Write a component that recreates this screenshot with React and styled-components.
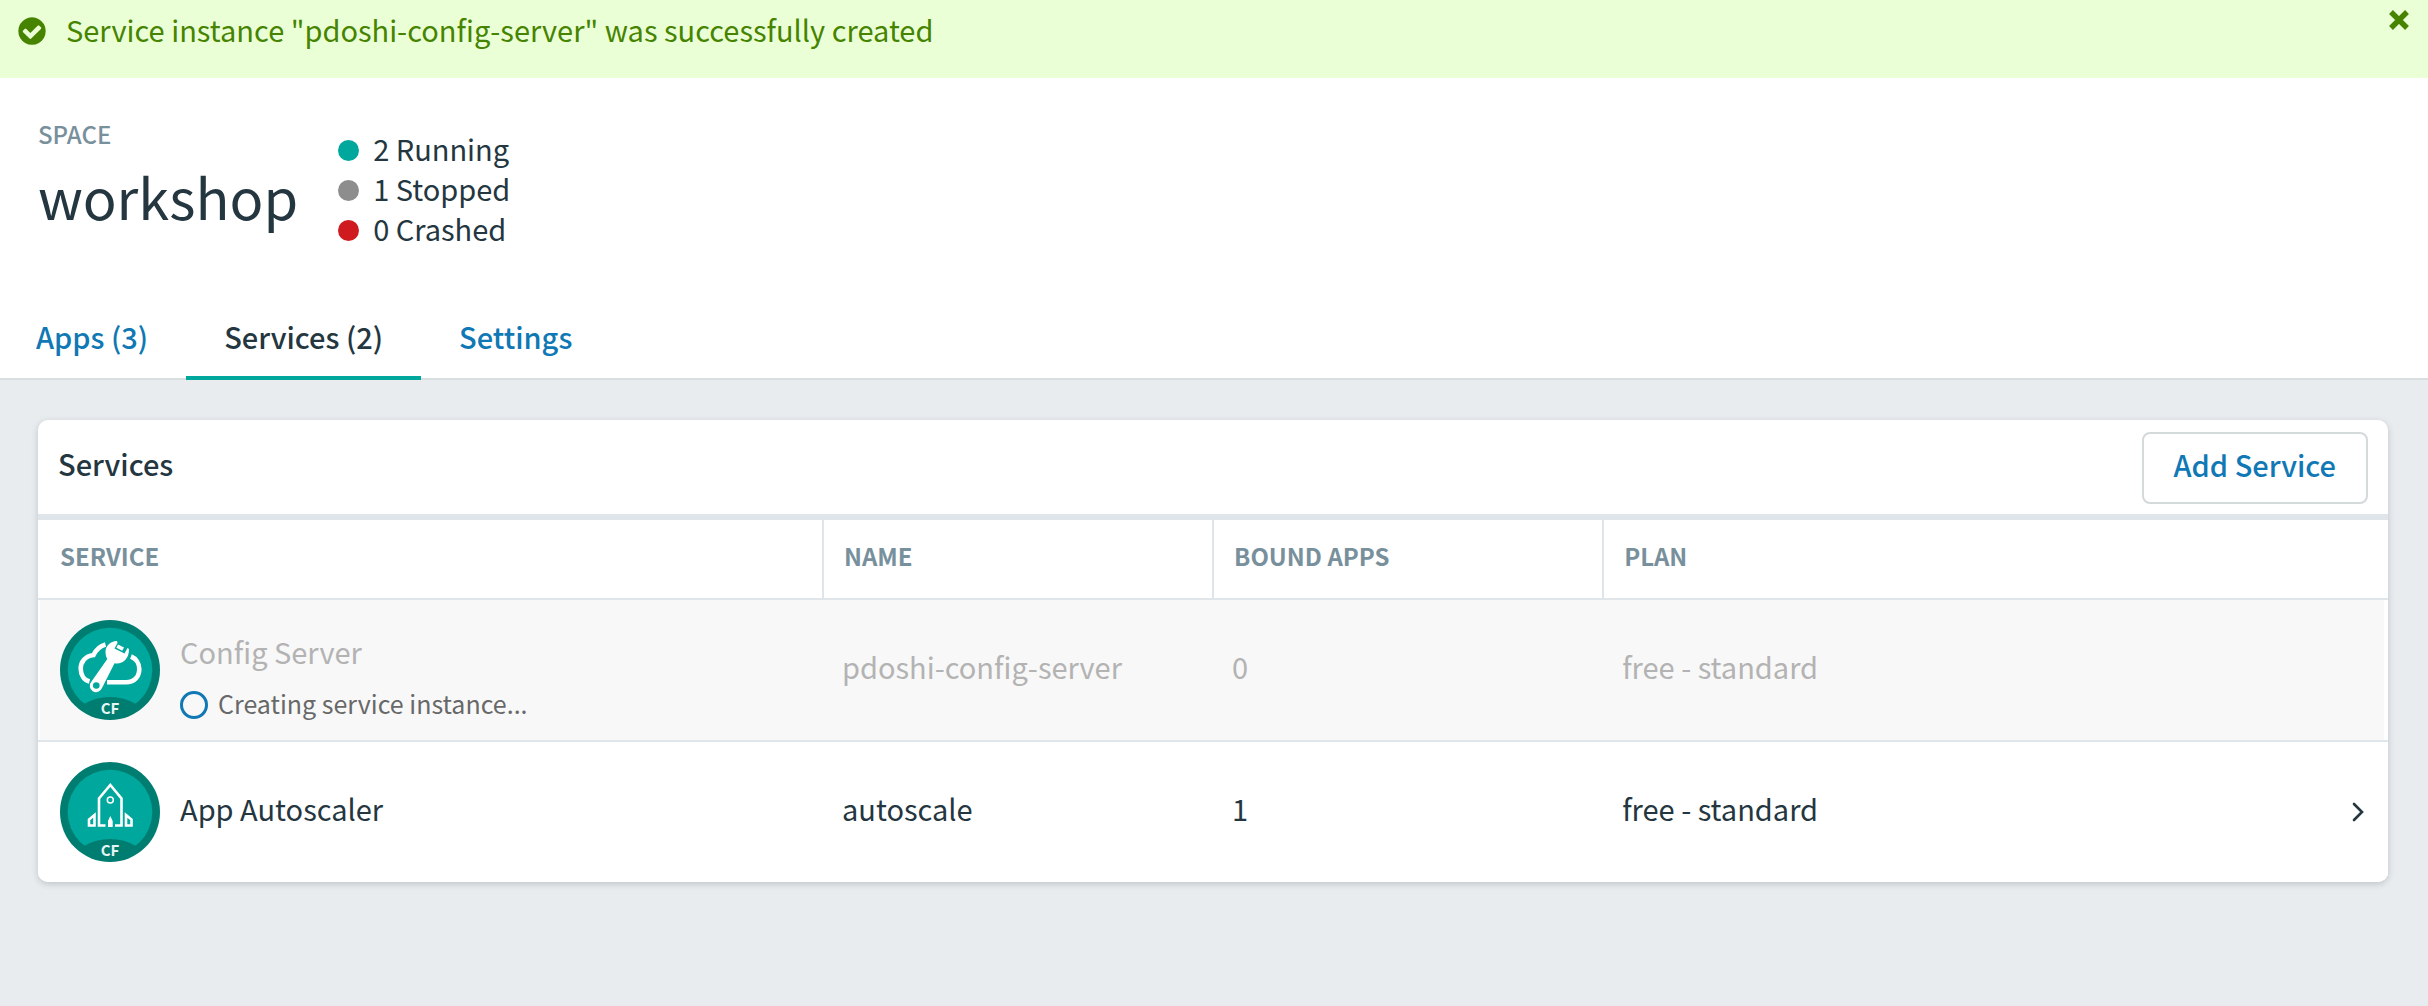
import React from 'react';
import styled, { createGlobalStyle } from 'styled-components';

const color = {
  ink: '#243640',
  muted: '#78909c',
  link: '#1078b4',
  teal: '#00a79d',
  tealDark: '#007d71',
  line: '#dfe5e8',
  page: '#e8ecef',
  success: '#468400',
};

const GlobalStyle = createGlobalStyle`
  *, *::before, *::after { box-sizing: border-box; }
  body {
    margin: 0;
    background: ${color.page};
    color: ${color.ink};
    font-family: 'Noto Sans CJK SC', 'Noto Sans', sans-serif;
    font-size: 29px;
    line-height: 40px;
  }
  button { font: inherit; cursor: pointer; }
  h1, h2, p, ul { margin: 0; padding: 0; }
`;

const Banner = styled.div`
  display: flex;
  align-items: flex-start;
  gap: 18px;
  height: 78px;
  padding: 9px 18px 0 16px;
  background: #ebffd7;
  color: ${color.success};
`;

const BannerIcon = styled.svg`
  flex: none;
  width: 32px;
  height: 32px;
  margin-top: 6px;
  fill: currentColor;
`;

const BannerText = styled.p`
  flex: 1;
`;

const CloseButton = styled.button`
  display: flex;
  padding: 0;
  border: 0;
  background: none;
  color: inherit;

  svg {
    width: 22px;
    height: 22px;
    stroke: currentColor;
    stroke-width: 5.4;
  }
`;

const Header = styled.header`
  background: #fff;
  border-bottom: 2px solid #d9dee1;
`;

const SpaceInfo = styled.div`
  display: flex;
  gap: 40px;
  padding: 36px 38px 0;
`;

const Eyebrow = styled.p`
  font-size: 24px;
  font-weight: 500;
  color: ${color.muted};
`;

const SpaceName = styled.h1`
  font-size: 56px;
  font-weight: 400;
  line-height: 84px;
`;

const StatusList = styled.ul`
  padding-top: 14px;
  list-style: none;
`;

const Status = styled.li`
  display: flex;
  align-items: center;
  gap: 14px;

  &::before {
    content: '';
    width: 21px;
    height: 21px;
    margin-top: 5px;
    border-radius: 50%;
    background: ${(p) => p.$dot};
  }
`;

const Tabs = styled.nav`
  display: flex;
  margin-bottom: -2px;
  padding: 68px 36px 0;
`;

const Tab = styled.a`
  padding: 0 38px 20px;
  border-bottom: 4px solid ${(p) => (p.$active ? color.teal : 'transparent')};
  color: ${(p) => (p.$active ? color.ink : color.link)};
  font-weight: 500;
  text-decoration: none;

  &:first-child { padding-left: 0; }
`;

const Main = styled.main`
  padding: 40px 40px 40px 38px;
`;

const Card = styled.section`
  overflow: hidden;
  border-radius: 10px;
  background: #fff;
  box-shadow: 0 2px 6px rgba(36, 54, 64, 0.22);
`;

const CardHeader = styled.div`
  display: flex;
  align-items: center;
  justify-content: space-between;
  padding: 12px 20px 10px;
  border-bottom: 6px solid ${color.line};
`;

const CardTitle = styled.h2`
  padding-bottom: 10px;
  font-size: 29px;
  font-weight: 500;
  line-height: 40px;
`;

const AddButton = styled.button`
  height: 72px;
  padding: 0 30px 8px;
  border: 2px solid #d4d9d9;
  border-radius: 8px;
  background: #fff;
  color: ${color.link};
  font-weight: 500;
`;

const Table = styled.table`
  width: 100%;
  border-collapse: separate;
  border-spacing: 0;
  table-layout: fixed;
`;

const HeadCell = styled.th`
  width: ${(p) => p.$width};
  height: 80px;
  padding: 0 20px 6px;
  border-bottom: 2px solid ${color.line};
  color: ${color.muted};
  font-size: 24px;
  font-weight: 700;
  text-align: left;

  & + & { border-left: 2px solid ${color.line}; }
  &:first-child { padding-left: 22px; }
`;

const Cell = styled.td`
  height: 140px;
  padding: 0 20px 8px;

  &:first-child { padding: 0 20px 0 22px; }
`;

const Row = styled.tr`
  color: ${(p) => (p.$pending ? '#b3b3b3' : color.ink)};

  ${Cell} { background: ${(p) => (p.$pending ? '#f8f8f8' : '#fff')}; }
  ${Cell}:first-child { box-shadow: inset 2px 0 #fff; }
  ${Cell}:last-child { box-shadow: inset -4px 0 #fff; }
  &:not(:last-child) ${Cell} {
    height: 142px;
    border-bottom: 2px solid ${color.line};
  }
`;

const ServiceLabel = styled.div`
  display: flex;
  align-items: center;
  gap: 20px;
`;

const ServiceText = styled.div`
  padding: ${(p) => (p.$pending ? '14px 0 0' : '0 0 8px')};
`;

const Progress = styled.div`
  display: flex;
  align-items: center;
  gap: 10px;
  margin-top: 12px;
  color: #686868;
  font-size: 25px;
`;

const Spinner = styled.span`
  width: 28px;
  height: 28px;
  margin-top: 4px;
  border: 3px solid ${color.link};
  border-radius: 50%;
`;

const PlanContent = styled.div`
  display: flex;
  align-items: center;
  justify-content: space-between;
`;

const OpenButton = styled.button`
  display: flex;
  margin-top: 8px;
  padding: 0;
  border: 0;
  background: none;
  color: inherit;
`;

const BadgeSvg = styled.svg`
  flex: none;
  width: 100px;
  height: 100px;

  text {
    font-size: 15px;
    font-weight: 700;
  }
`;

function Badge({ children }) {
  return (
    <BadgeSvg viewBox="0 0 100 100" aria-hidden="true">
      <circle cx="50" cy="50" r="50" fill={color.tealDark} />
      <circle cx="50" cy="50" r="42.3" fill={color.teal} />
      <path d="M24 84Q36 77 50 77T76 84L70 94H30Z" fill={color.tealDark} />
      {children}
      <text x="50" y="94" textAnchor="middle" fill="#e6f6f4">CF</text>
    </BadgeSvg>
  );
}

function ConfigIcon() {
  return (
    <Badge>
      <g fill="none" stroke="#fff" strokeWidth="4.6">
        <path d="M45.500 24.500C40 26 36 30 33.500 35C25 36 20.700 42 20.700 48.500C20.700 55 24 60 29.500 61.500" />
        <path d="M71 36.500C76 38.500 79.300 43.500 79.300 49C79.300 57 74 62.300 66 62.300H47" />
      </g>
      <path
        d="M57 21C50 21.500 45.500 26 45.500 32C45.500 35 46.300 37 47.300 39L31.500 61.500A6.300 6.300 0 1 0 42 68L54.500 43.200C62 44.500 69 40 69 29L67.500 28L64.500 33.500L54.500 28.500L57.500 23Z"
        fill="#fff"
      />
      <path d="M58 24.500L64 27.600L62.300 30.800L56.400 27.700Z" fill="#fff" />
      <circle cx="36.300" cy="65.500" r="3.300" fill={color.teal} />
    </Badge>
  );
}

function RocketIcon() {
  return (
    <Badge>
      <g fill="none" stroke="#fff" strokeWidth="2.600">
        <path d="M45.500 63.500H39V36.500L50.300 23L61.500 36.500V63.500H55" />
        <circle cx="50.300" cy="38" r="3" strokeWidth="1.500" />
        <path d="M34.500 53L29 57.500V63.500H34.500ZM66 53L71.500 57.500V63.500H66Z" />
      </g>
      <path d="M50.300 54L52.700 59V65H48V59Z" fill="#fff" />
    </Badge>
  );
}

const services = [
  { service: 'Config Server', name: 'pdoshi-config-server', bound: 0, plan: 'free - standard', pending: true, Icon: ConfigIcon },
  { service: 'App Autoscaler', name: 'autoscale', bound: 1, plan: 'free - standard', pending: false, Icon: RocketIcon },
];

export default function App() {
  return (
    <>
      <GlobalStyle />
      <Banner role="status">
        <BannerIcon viewBox="0 0 1792 1792" aria-hidden="true">
          <path d="M1412 734q0-28-18-46l-91-90q-19-19-45-19t-45 19l-408 407-226-226q-19-19-45-19t-45 19l-91 90q-18 18-18 46 0 27 18 45l362 362q19 19 45 19 27 0 46-19l543-543q18-18 18-45zm252 162q0 209-103 385.500t-279.500 279.500-385.500 103-385.500-103-279.500-279.500-103-385.500 103-385.500 279.500-279.500 385.500-103 385.500 103 279.500 279.500 103 385.500z" />
        </BannerIcon>
        <BannerText>Service instance "pdoshi-config-server" was successfully created</BannerText>
        <CloseButton type="button" aria-label="Close">
          <svg viewBox="0 0 22 22" aria-hidden="true">
            <path d="M3 3L19 19M19 3L3 19" />
          </svg>
        </CloseButton>
      </Banner>
      <Header>
        <SpaceInfo>
          <div>
            <Eyebrow>SPACE</Eyebrow>
            <SpaceName>workshop</SpaceName>
          </div>
          <StatusList>
            <Status $dot={color.teal}>2 Running</Status>
            <Status $dot="#8c8d8c">1 Stopped</Status>
            <Status $dot="#cf1b20">0 Crashed</Status>
          </StatusList>
        </SpaceInfo>
        <Tabs>
          <Tab href="#apps">Apps (3)</Tab>
          <Tab href="#services" $active aria-current="page">Services (2)</Tab>
          <Tab href="#settings">Settings</Tab>
        </Tabs>
      </Header>
      <Main>
        <Card>
          <CardHeader>
            <CardTitle>Services</CardTitle>
            <AddButton type="button">Add Service</AddButton>
          </CardHeader>
          <Table>
            <thead>
              <tr>
                <HeadCell $width="33.36%">SERVICE</HeadCell>
                <HeadCell $width="16.6%">NAME</HeadCell>
                <HeadCell $width="16.6%">BOUND APPS</HeadCell>
                <HeadCell>PLAN</HeadCell>
              </tr>
            </thead>
            <tbody>
              {services.map(({ service, name, bound, plan, pending, Icon }) => (
                <Row key={name} $pending={pending}>
                  <Cell>
                    <ServiceLabel>
                      <Icon />
                      <ServiceText $pending={pending}>
                        <div>{service}</div>
                        {pending && (
                          <Progress><Spinner />Creating service instance...</Progress>
                        )}
                      </ServiceText>
                    </ServiceLabel>
                  </Cell>
                  <Cell>{name}</Cell>
                  <Cell>{bound}</Cell>
                  <Cell>
                    <PlanContent>
                      {plan}
                      {!pending && (
                        <OpenButton type="button" aria-label={`Open ${name}`}>
                          <svg width="20" height="24" viewBox="0 0 20 24" fill="none" stroke="currentColor" strokeWidth="2.6" strokeLinecap="round" aria-hidden="true">
                            <path d="M6 4L14 12L6 20" />
                          </svg>
                        </OpenButton>
                      )}
                    </PlanContent>
                  </Cell>
                </Row>
              ))}
            </tbody>
          </Table>
        </Card>
      </Main>
    </>
  );
}
